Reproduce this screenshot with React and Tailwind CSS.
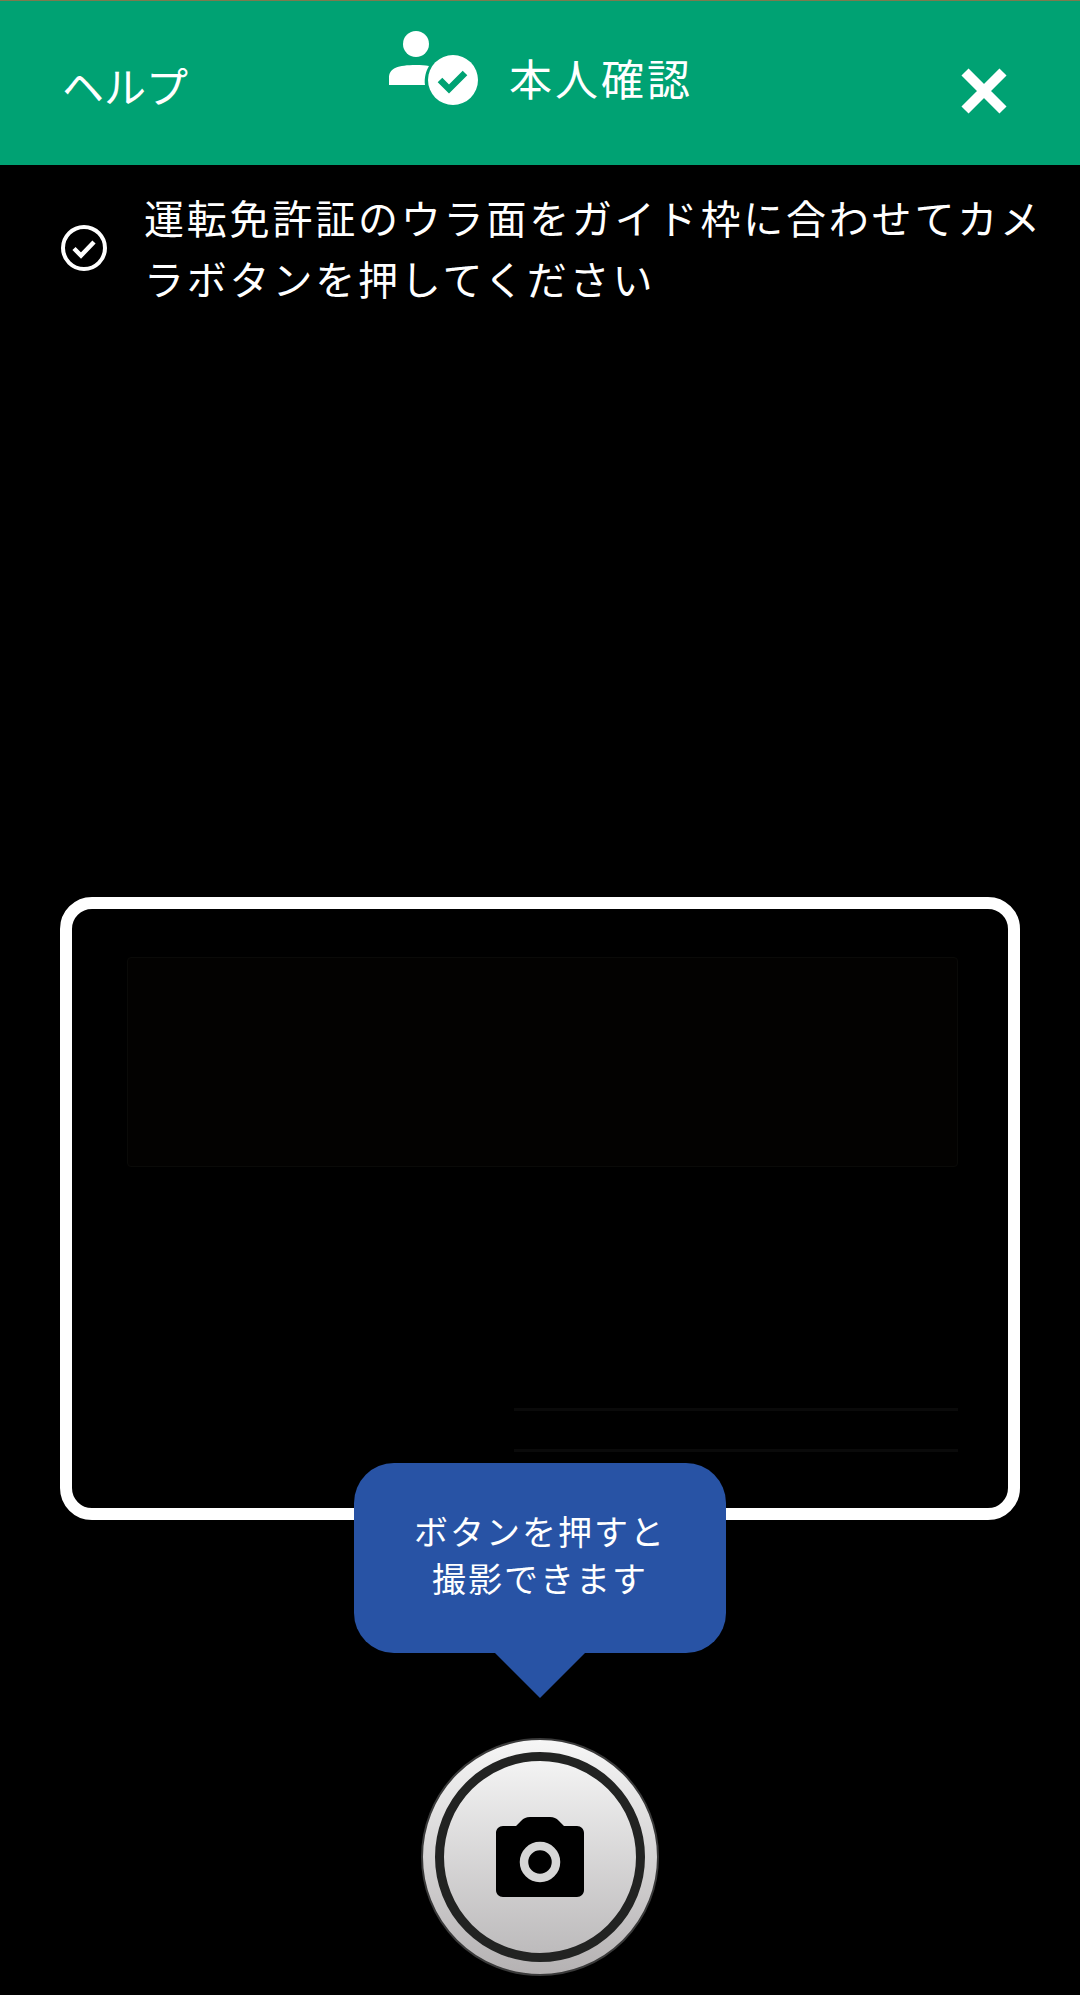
const PersonCheckIcon = () => (
  <svg width="96" height="80" viewBox="0 0 96 80" className="block">
    <circle cx="28" cy="14" r="13" fill="#fff" />
    <path d="M1 55V48C1 38 10 35 28 35C33 35 37 35.300 41 36C38 41 36 48 37 55Z" fill="#fff" />
    <circle cx="65" cy="50" r="25" fill="#fff" />
    <path d="M52 50L61 59L77 43" fill="none" stroke="#00a273" strokeWidth="6.500" />
  </svg>
);

const CameraIcon = () => (
  <svg width="88" height="80" viewBox="0 0 88 80" className="block">
    <path
      d="M7 9H20L25 4C28 1 30 0 34 0H54C58 0 60 1 63 4L68 9H81C85 9 88 12 88 16V73C88 77 85 80 81 80H7C3 80 0 77 0 73V16C0 12 3 9 7 9Z"
      fill="#000"
    />
    <circle cx="44" cy="45" r="16" fill="none" stroke="#d6d6d6" strokeWidth="8.500" />
  </svg>
);

export default function App() {
  return (
    <div className="flex h-[1995px] w-[1080px] flex-col overflow-hidden bg-black text-white">
      <div className="font-['Noto_Sans_CJK_JP',sans-serif] flex h-[165px] shrink-0 items-start border-t border-[#7d7a4e] bg-[#00a273]">
        <div className="mt-[58px] ml-[62px] w-[326px] text-[42px] leading-[52px]">ヘルプ</div>
        <div className="mt-[29px] flex items-start">
          <PersonCheckIcon />
          <div className="mt-[23px] ml-[25px] text-[43px] leading-[48px] tracking-[3px]">本人確認</div>
        </div>
        <svg width="46" height="46" viewBox="0 0 46 46" className="mt-[67px] ml-[268px] block">
          <path d="M4 4L42 42M42 4L4 42" stroke="#fff" strokeWidth="10" />
        </svg>
      </div>

      <div className="font-['Noto_Sans_CJK_JP',sans-serif] mt-[22px] flex items-center pl-[61px]">
        <svg width="46" height="46" viewBox="0 0 46 46" className="block shrink-0">
          <circle cx="23" cy="23" r="21" fill="none" stroke="#fff" strokeWidth="4" />
          <path d="M13 23.500L20 30.500L33 17" fill="none" stroke="#fff" strokeWidth="4.500" />
        </svg>
        <div className="ml-[37px] w-[920px] text-[40px] leading-[61px] tracking-[2.800px]">
          運転免許証のウラ面をガイド枠に合わせてカメ
          <br />
          ラボタンを押してください
        </div>
      </div>

      <div className="mt-[588px] ml-[60px] h-[623px] w-[960px] shrink-0 rounded-[32px] border-[12px] border-white">
        <div className="mt-[48px] ml-[55px] h-[210px] w-[831px] rounded-[4px] border border-[#0a0a08] bg-[#030201]" />
        <div className="mt-[241px] ml-[442px] h-[3px] w-[444px] bg-[#0a0a0a]" />
        <div className="mt-[38px] ml-[442px] h-[3px] w-[444px] bg-[#0a0a0a]" />
      </div>

      {/* Bubble over the frame */}
      <div className="font-['Noto_Sans_CJK_JP',sans-serif] relative mt-[-57px] ml-[354px] h-[190px] w-[372px] shrink-0 rounded-[40px] bg-[#2853a5] pt-[44px] text-center text-[34px] leading-[47px] tracking-[2px]">
        ボタンを押すと
        <br />
        撮影できます
      </div>
      <div className="ml-[495px] h-0 w-0 shrink-0 border-x-[45px] border-t-[45px] border-x-transparent border-t-[#2853a5]" />

      <div className="mt-[40px] ml-[421px] flex h-[238px] w-[238px] shrink-0 items-center justify-center rounded-full border-2 border-[#3a3a3a] bg-gradient-to-b from-[#f6f6f6] to-[#b5b2b3]">
        <div className="flex h-[210px] w-[210px] items-center justify-center rounded-full border-[9px] border-[#222322] bg-gradient-to-b from-[#f3f3f3] to-[#bdbbbc]">
          <CameraIcon />
        </div>
      </div>
    </div>
  );
}
